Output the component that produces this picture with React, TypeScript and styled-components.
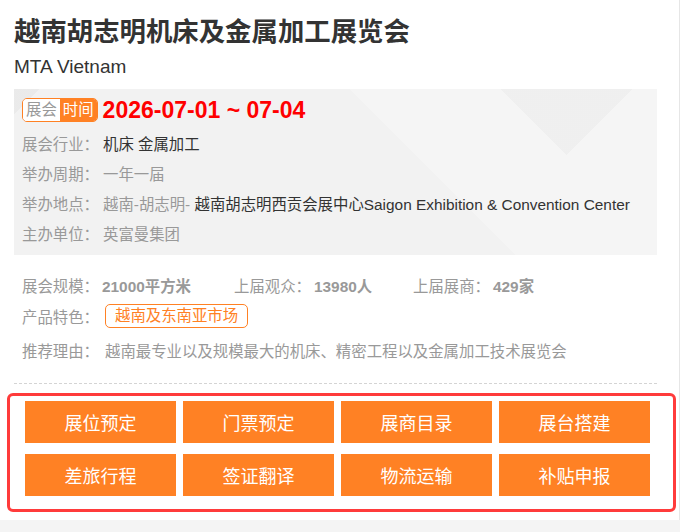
import React from "react";
import styled, { createGlobalStyle } from "styled-components";

const GlobalStyle = createGlobalStyle`
  html, body { margin: 0; padding: 0; background: #f4f4f4; }
  body { font-family: "Liberation Sans", "Noto Sans CJK SC", sans-serif; }
`;

const ORANGE = "#ff8124";

const Page = styled.div`
  box-sizing: border-box;
  width: 680px;
  background: #fff;
  border-right: 1px solid #e6e6e6;
  padding: 15px 22px 8px 14px;
`;

const Title = styled.h1`
  margin: 0;
  font-size: 26.4px;
  line-height: 34px;
  font-weight: bold;
  color: #333;
`;

const Subtitle = styled.div`
  margin-top: 5px;
  font-size: 19px;
  line-height: 26px;
  color: #333;
`;

const InfoBox = styled.div`
  margin-top: 9px;
  padding: 8px 8px 7px;
  background-color: #f2f2f2;
  background-image:
    conic-gradient(from -45deg at 552px 66px, rgba(0, 0, 0, 0.022) 0deg 90deg, transparent 90deg 360deg),
    linear-gradient(45deg, transparent 0 62%, rgba(255, 255, 255, 0.25) 62% 100%),
    linear-gradient(135deg, rgba(0, 0, 0, 0.03) 0 18px, transparent 18px);
`;

const Row = styled.div<{ $h?: number; $mt?: number; $mb?: number }>`
  display: flex;
  align-items: center;
  height: ${(p) => p.$h ?? 30}px;
  margin-top: ${(p) => p.$mt ?? 0}px;
  margin-bottom: ${(p) => p.$mb ?? 0}px;
  font-size: 15.4px;
  white-space: nowrap;
`;

const Label = styled.span<{ $w?: number }>`
  flex: none;
  color: #999;
  width: ${(p) => (p.$w ? `${p.$w}px` : "auto")};
`;

const Value = styled.span<{ $dark?: boolean; $bold?: boolean }>`
  color: ${(p) => (p.$dark ? "#333" : "#999")};
  font-weight: ${(p) => (p.$bold ? "bold" : "normal")};
`;

const Badge = styled.span`
  display: inline-flex;
  border: 1px solid ${ORANGE};
  border-radius: 5px;
  overflow: hidden;
  font-size: 15.4px;
  line-height: 22px;
`;

const BadgePart = styled.span<{ $on?: boolean }>`
  padding: 0 3px;
  background: ${(p) => (p.$on ? ORANGE : "#fff")};
  color: ${(p) => (p.$on ? "#fff" : "#999")};
`;

const DateText = styled.span`
  margin-left: 5px;
  font-size: 23px;
  font-weight: bold;
  color: #ff0000;
`;

const Lower = styled.div`
  margin-top: 15px;
  padding-left: 8px;
`;

const StatItem = styled.span<{ $w?: number }>`
  display: inline-flex;
  align-items: center;
  width: ${(p) => (p.$w ? `${p.$w}px` : "auto")};
  flex: none;
`;

const StatValue = styled.span`
  margin-left: 3px;
  color: #999;
  font-weight: bold;
`;

const Tag = styled.span`
  border: 1px solid ${ORANGE};
  border-radius: 5px;
  padding: 0 9px;
  line-height: 22px;
  color: ${ORANGE};
`;

const Divider = styled.div`
  margin-top: 18px;
  border-top: 1px dashed #d4d4d4;
`;

const ActionBox = styled.div`
  box-sizing: border-box;
  width: 669px;
  margin: 9px 0 0 -7px;
  border: 3px solid #ff3b3b;
  border-radius: 6px;
  padding: 5px 0 13px 15px;
  display: grid;
  grid-template-columns: repeat(4, 151px);
  column-gap: 7px;
  row-gap: 11px;
`;

const ActionButton = styled.div`
  height: 42px;
  display: flex;
  align-items: center;
  justify-content: center;
  background: ${ORANGE};
  color: #fff;
  font-size: 18px;
  cursor: pointer;
`;

const actions = ["展位预定", "门票预定", "展商目录", "展台搭建", "差旅行程", "签证翻译", "物流运输", "补贴申报"];

export default function App() {
  return (
    <>
      <GlobalStyle />
      <Page>
        <Title>越南胡志明机床及金属加工展览会</Title>
        <Subtitle>MTA Vietnam</Subtitle>
        <InfoBox>
          <Row $h={26} $mb={5}>
            <Badge>
              <BadgePart>展会</BadgePart>
              <BadgePart $on>时间</BadgePart>
            </Badge>
            <DateText>2026-07-01 ~ 07-04</DateText>
          </Row>
          <Row>
            <Label $w={81}>展会行业：</Label>
            <Value $dark>机床 金属加工</Value>
          </Row>
          <Row>
            <Label $w={81}>举办周期：</Label>
            <Value>一年一届</Value>
          </Row>
          <Row>
            <Label $w={81}>举办地点：</Label>
            <Value>越南-胡志明-</Value>
            <Value $dark>&nbsp;越南胡志明西贡会展中心Saigon Exhibition &amp; Convention Center</Value>
          </Row>
          <Row>
            <Label $w={81}>主办单位：</Label>
            <Value>英富曼集团</Value>
          </Row>
        </InfoBox>
        <Lower>
          <Row>
            <StatItem $w={212}>
              <Label>展会规模：</Label>
              <StatValue>21000平方米</StatValue>
            </StatItem>
            <StatItem $w={179}>
              <Label>上届观众：</Label>
              <StatValue>13980人</StatValue>
            </StatItem>
            <StatItem>
              <Label>上届展商：</Label>
              <StatValue>429家</StatValue>
            </StatItem>
          </Row>
          <Row $h={32}>
            <Label $w={83}>产品特色：</Label>
            <Tag>越南及东南亚市场</Tag>
          </Row>
          <Row $mt={3}>
            <Label $w={83}>推荐理由：</Label>
            <Value>越南最专业以及规模最大的机床、精密工程以及金属加工技术展览会</Value>
          </Row>
        </Lower>
        <Divider />
        <ActionBox>
          {actions.map((a) => (
            <ActionButton key={a}>{a}</ActionButton>
          ))}
        </ActionBox>
      </Page>
    </>
  );
}
